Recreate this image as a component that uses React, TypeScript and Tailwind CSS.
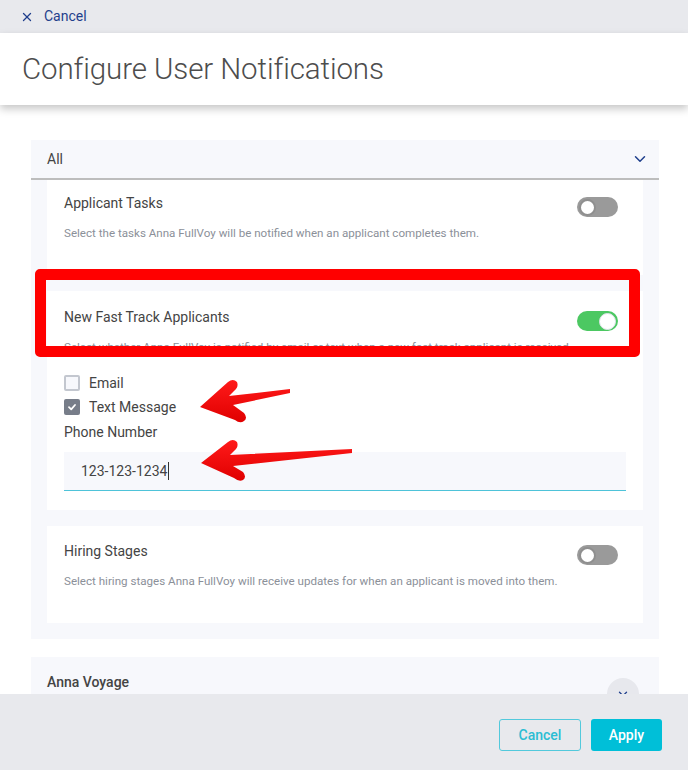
import { ChevronDown, X } from "lucide-react";

const FONT = { fontFamily: "Roboto, 'Noto Sans', sans-serif" };

function Toggle({ on }: { on?: boolean }) {
  return (
    <div
      className={`mt-[4px] mr-[25px] flex h-[20px] w-[41px] shrink-0 items-center rounded-full px-[2px] ${
        on ? "justify-end bg-[#4cc862]" : "justify-start bg-[#9a9a9a]"
      }`}
    >
      <div
        className={`h-[17px] w-[17px] rounded-full bg-white ${
          on ? "border border-[#e0e3ea] bg-[#f5f6fa]" : "border-2 border-[#8f8f8f]"
        }`}
      />
    </div>
  );
}

function Checkbox({ checked }: { checked?: boolean }) {
  return checked ? (
    <div className="flex h-[16px] w-[16px] items-center justify-center rounded-[2px] bg-[#777d89]">
      <svg width="10" height="10" viewBox="0 0 10 10">
        <path d="M2 5.2 L4.2 7.3 L8 3" fill="none" stroke="white" strokeWidth="1.8" strokeLinecap="round" strokeLinejoin="round" />
      </svg>
    </div>
  ) : (
    <div className="h-[16px] w-[16px] rounded-[2px] border-2 border-[#c3c7cf] bg-[#f7f8fc]" />
  );
}

function SettingCard({
  title,
  desc,
  on,
  pad,
  children,
}: {
  title: string;
  desc: string;
  on?: boolean;
  pad: string;
  children?: React.ReactNode;
}) {
  return (
    <div className={`bg-white pl-[17px] ${pad}`}>
      <div className="flex items-start justify-between">
        <div className="text-[14px] leading-[20px] text-[#444]">{title}</div>
        <Toggle on={on} />
      </div>
      <div className="mt-[8px] text-[11.6px] leading-[16px] text-[#8b9099]">{desc}</div>
      {children}
    </div>
  );
}

export default function App() {
  return (
    <div className="relative flex h-[770px] w-[688px] flex-col overflow-hidden bg-white" style={FONT}>
      {/* top bar */}
      <div className="flex h-[33px] shrink-0 items-center bg-[#e8e9ed] pl-[20px] text-[14px] text-[#1f3f8c]">
        <X size={14} strokeWidth={2.2} />
        <span className="ml-[10px]">Cancel</span>
      </div>

      {/* header */}
      <div className="relative z-10 flex h-[72px] shrink-0 items-center bg-white pl-[22px] shadow-[0_4px_8px_rgba(0,0,0,0.22)]">
        <h1 className="text-[29.5px] font-light tracking-[-0.1px] text-[#4d4d4d]">Configure User Notifications</h1>
      </div>

      {/* content */}
      <div className="flex-1 overflow-hidden bg-white pl-[31px] pr-[29px] pt-[35px]">
        <div className="bg-[#f7f8fc]">
          <div className="flex h-[40px] items-center justify-between border-b-2 border-[#bdbdbd] pl-[16px] pr-[10px]">
            <span className="text-[14px] text-[#444]">All</span>
            <ChevronDown size={18} strokeWidth={2} className="text-[#1f3f8c]" />
          </div>

          <div className="flex flex-col gap-[16px] px-[16px] pb-[16px]">
            <SettingCard
              pad="pt-[13px] pb-[34px]"
              title="Applicant Tasks"
              desc="Select the tasks Anna FullVoy will be notified when an applicant completes them."
            />

            <SettingCard
              pad="pt-[16px] pb-[19px]"
              on
              title="New Fast Track Applicants"
              desc="Select whether Anna FullVoy is notified by email or text when a new fast track applicant is received."
            >
              <div className="mt-[16px] flex flex-col pr-[17px] text-[14px] text-[#444]">
                <label className="flex h-[24px] items-center gap-[9px]">
                  <Checkbox />
                  <span>Email</span>
                </label>
                <label className="flex h-[24px] items-center gap-[9px]">
                  <Checkbox checked />
                  <span>Text Message</span>
                </label>
                <div className="mt-[3px] leading-[20px]">Phone Number</div>
                <div className="mt-[10px] flex h-[39px] items-center border-b border-[#4ec3d9] bg-[#f7f8fc] pl-[17px]">
                  <span>123-123-1234</span>
                  <span className="ml-[1px] h-[18px] w-px bg-[#333]" />
                </div>
              </div>
            </SettingCard>

            <SettingCard
              pad="pt-[15px] pb-[34px]"
              title="Hiring Stages"
              desc="Select hiring stages Anna FullVoy will receive updates for when an applicant is moved into them."
            />
          </div>
        </div>

        <div className="mt-[18px] flex items-start justify-between bg-[#f7f8fc] pl-[16px] pr-[20px] pt-[15px]">
          <span className="text-[14px] font-medium leading-[20px] text-[#444]">Anna Voyage</span>
          <div className="mt-[6px] flex h-[32px] w-[32px] items-center justify-center rounded-full bg-[#e7e8ed]">
            <ChevronDown size={14} strokeWidth={2.2} className="text-[#1f3f8c]" />
          </div>
        </div>
      </div>

      {/* footer */}
      <div className="z-10 flex h-[76px] shrink-0 items-start justify-end gap-[10px] bg-[#e8e9ed] pr-[26px] pt-[25px]">
        <button className="h-[32px] w-[82px] rounded-[3px] border-[1.5px] border-[#52c9dc] text-[14px] font-medium text-[#2bbdd3]">
          Cancel
        </button>
        <button className="h-[32px] w-[71px] rounded-[3px] bg-[#00bfd8] text-[14px] font-medium text-white">
          Apply
        </button>
      </div>

      {/* annotations */}
      <div className="pointer-events-none absolute left-[35px] top-[269px] h-[88px] w-[605px] rounded-[5px] border-[11px] border-[#ff0000]" />
      <svg className="pointer-events-none absolute inset-0" width="688" height="770" viewBox="0 0 688 770">
        <defs>
          <linearGradient id="arr" x1="0" y1="0" x2="0" y2="1">
            <stop offset="0" stopColor="#ff1a1a" />
            <stop offset="1" stopColor="#e00000" />
          </linearGradient>
        </defs>
        <path
          d="M200 407 L228 382 Q233 378 237 382 Q239 387 234 391 L229 396 L290 389 L290 393 L233 405 L244 413 Q248 418 244 421 Q240 424 235 420 Z"
          fill="url(#arr)"
        />
        <path
          d="M201 463 L228 442 Q233 438 237 442 Q239 447 234 451 L230 455 L352 449 L352 453 L233 466 L243 472 Q247 477 243 480 Q239 482 234 478 Z"
          fill="url(#arr)"
        />
      </svg>
    </div>
  );
}
